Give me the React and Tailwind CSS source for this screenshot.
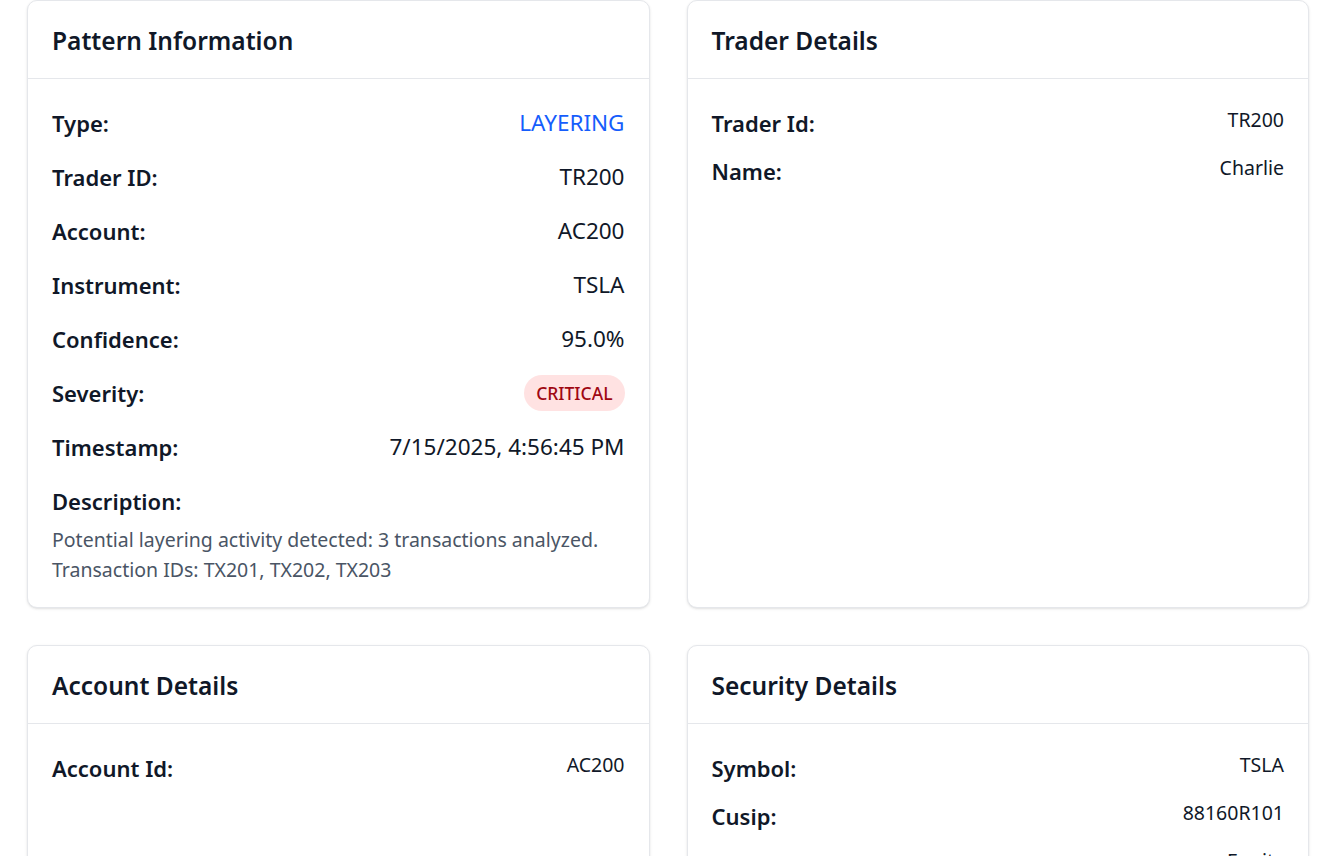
const pattern = [
  { label: 'Type:', value: 'LAYERING', tone: 'blue' },
  { label: 'Trader ID:', value: 'TR200' },
  { label: 'Account:', value: 'AC200' },
  { label: 'Instrument:', value: 'TSLA' },
  { label: 'Confidence:', value: '95.0%' },
  { label: 'Severity:', value: 'CRITICAL', tone: 'badge' },
  { label: 'Timestamp:', value: '7/15/2025, 4:56:45 PM' },
];

const trader = [
  ['Trader Id:', 'TR200'],
  ['Name:', 'Charlie'],
];

const account = [['Account Id:', 'AC200']];

const security = [
  ['Symbol:', 'TSLA'],
  ['Cusip:', '88160R101'],
  ['Instrument Type:', 'Equity'],
  ['Exchange:', 'NASDAQ'],
];

function Card({ title, children }) {
  return (
    <div className="bg-white border border-gray-200 rounded-[10px] shadow-sm flex flex-col">
      <div className="px-6 pt-6 pb-[21px] border-b border-gray-200">
        <h2 className="text-[24.5px] leading-[32px] font-semibold text-gray-900">{title}</h2>
      </div>
      <div className="px-6 pt-[29px] pb-[22px]">{children}</div>
    </div>
  );
}

function DetailList({ rows }) {
  return (
    <div className="flex flex-col gap-[18px]">
      {rows.map(([label, value]) => (
        <div key={label} className="flex justify-between items-start">
          <span className="text-[22px] leading-[30px] font-semibold text-gray-900">{label}</span>
          <span className="text-[19.5px] leading-6 text-gray-900">{value}</span>
        </div>
      ))}
    </div>
  );
}

export default function App() {
  return (
    <div
      className="h-[856px] overflow-hidden bg-white"
      style={{ fontFamily: '"Noto Sans", "Open Sans", sans-serif' }}
    >
      <div className="grid grid-cols-2 gap-x-[37px] gap-y-[37px] pl-[27px] pr-[23px]">
        <Card title="Pattern Information">
          <div className="flex flex-col gap-6">
            {pattern.map((row) => (
              <div key={row.label} className="flex justify-between items-center h-[30px]">
                <span className="text-[22px] leading-[30px] font-semibold text-gray-900">{row.label}</span>
                {row.tone === 'badge' ? (
                  <span className="px-3 h-9 flex items-center rounded-full bg-red-100 text-red-800 text-[17.5px] font-medium">
                    {row.value}
                  </span>
                ) : (
                  <span className={`text-[22.5px] leading-[30px] ${row.tone === 'blue' ? 'text-blue-600' : 'text-gray-900'}`}>
                    {row.value}
                  </span>
                )}
              </div>
            ))}
            <div>
              <div className="text-[22px] leading-[30px] font-semibold text-gray-900">Description:</div>
              <p className="mt-[9px] text-[19.5px] leading-[30px] text-gray-600">
                Potential layering activity detected: 3 transactions analyzed. Transaction IDs: TX201, TX202, TX203
              </p>
            </div>
          </div>
        </Card>

        <Card title="Trader Details">
          <DetailList rows={trader} />
        </Card>

        <Card title="Account Details">
          <DetailList rows={account} />
          <div className="h-[120px]" />
        </Card>

        <Card title="Security Details">
          <DetailList rows={security} />
        </Card>
      </div>
    </div>
  );
}
